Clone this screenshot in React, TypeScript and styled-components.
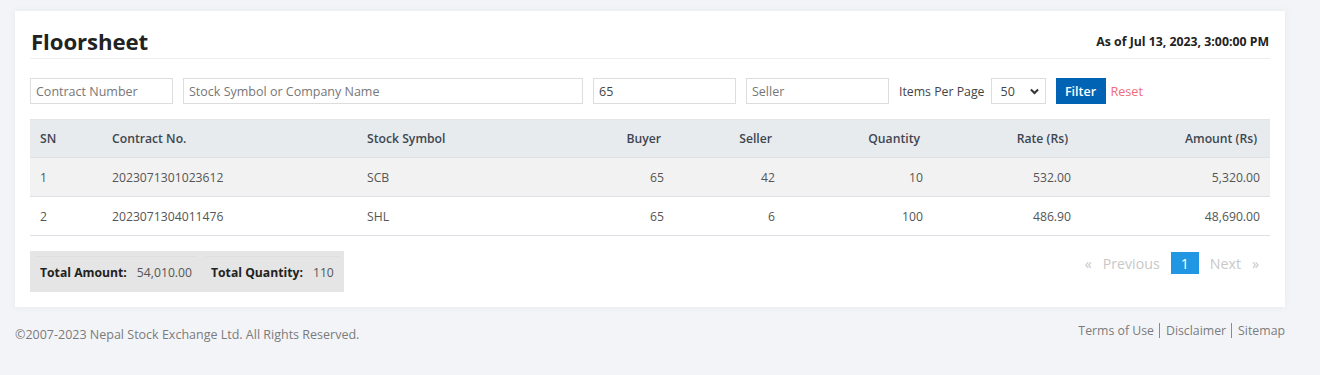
import React from "react";
import styled, { createGlobalStyle } from "styled-components";

const Global = createGlobalStyle`
  html, body { margin: 0; padding: 0; }
  body {
    background: #f3f4f8;
    font-family: "Open Sans", "Noto Sans", sans-serif;
    color: #555;
  }
  * { box-sizing: border-box; }
`;

const Page = styled.div`
  width: 1320px;
  height: 375px;
  padding: 11px 35px 0 15px;
`;

const Card = styled.section`
  background: #fff;
  box-shadow: 0 0 8px rgba(0, 0, 0, 0.05);
  padding: 13px 15px 15px 15px;
`;

const Header = styled.div`
  display: flex;
  align-items: center;
  justify-content: space-between;
  height: 35px;
  border-bottom: 1px solid #eceef1;
`;

const Title = styled.h1`
  margin: 0 0 0 1px;
  font-size: 22.2px;
  font-weight: 700;
  color: #222;
  letter-spacing: -0.1px;
`;

const AsOf = styled.div`
  font-size: 12.3px;
  font-weight: 700;
  color: #222;
  margin-right: 1px;
`;

const Filters = styled.form`
  display: flex;
  align-items: center;
  gap: 10px;
  margin-top: 19px;
  height: 26px;
`;

const Input = styled.input<{ $w: number }>`
  width: ${(p) => p.$w}px;
  height: 26px;
  border: 1px solid #ddd;
  padding: 0 5px;
  font-family: inherit;
  font-size: 12.5px;
  color: #444;
  outline: none;
  &::placeholder { color: #777; }
`;

const Label = styled.span`
  font-size: 12.3px;
  color: #444;
  margin-right: -4px;
`;

const Select = styled.div`
  position: relative;
  width: 55px;
  height: 26px;
  border: 1px solid #ddd;
  display: flex;
  align-items: center;
  padding: 0 0 0 9px;
  font-size: 12.5px;
  color: #444;
`;

const Chevron = styled.svg`
  position: absolute;
  right: 6px;
  top: 9px;
`;

const FilterButton = styled.button`
  height: 26px;
  width: 50px;
  border: none;
  background: #0063b3;
  color: #fff;
  font-family: inherit;
  font-size: 12.5px;
  font-weight: 600;
  padding: 0;
  margin-right: -5px;
`;

const ResetLink = styled.a`
  color: #f26b7a;
  font-size: 12.6px;
`;

const Table = styled.table`
  width: 100%;
  margin-top: 15px;
  border-collapse: collapse;
  table-layout: fixed;
  font-size: 12.2px;
`;

const Th = styled.th<{ $right?: boolean; $w: number }>`
  width: ${(p) => p.$w}px;
  height: 38px;
  background: #e8ebee;
  color: #3e4650;
  font-weight: 600;
  text-align: ${(p) => (p.$right ? "right" : "left")};
  padding: 0 ${(p) => (p.$right ? 13 : 10)}px 0 10px;
  border-top: 1px solid #e2e5e8;
`;

const Tr = styled.tr<{ $striped?: boolean }>`
  background: ${(p) => (p.$striped ? "#f2f2f2" : "#fff")};
`;

const Td = styled.td<{ $right?: boolean }>`
  height: 39px;
  padding: 0 10px;
  text-align: ${(p) => (p.$right ? "right" : "left")};
  color: #555;
  border-top: 1px solid #dee2e6;
  border-bottom: 1px solid #dee2e6;
`;

const Bottom = styled.div`
  display: flex;
  justify-content: space-between;
  align-items: flex-start;
  margin-top: 15px;
`;

const Totals = styled.div`
  display: flex;
  gap: 9px;
  background: #e5e5e5;
  padding: 5px;
`;

const TotalCell = styled.div`
  display: flex;
  align-items: center;
  gap: 10px;
  height: 31px;
  padding: 0 5px;
  border-top: 1px solid #dddfe2;
  font-size: 12.2px;
`;

const TotalLabel = styled.span`
  font-weight: 700;
  color: #222;
`;

const TotalValue = styled.span`
  color: #555;
`;

const Pager = styled.ul`
  display: flex;
  align-items: center;
  list-style: none;
  margin: 1px 11px 0 0;
  padding: 0;
  gap: 11px;
  font-size: 14.2px;
  color: #c8c8c8;
`;

const PageItem = styled.li<{ $active?: boolean }>`
  height: 22px;
  display: flex;
  align-items: center;
  padding: ${(p) => (p.$active ? "0 10px" : "0")};
  background: ${(p) => (p.$active ? "#2196e3" : "transparent")};
  color: ${(p) => (p.$active ? "#fff" : "#c8c8c8")};
`;

const Footer = styled.footer`
  display: flex;
  justify-content: space-between;
  align-items: flex-start;
  margin-top: 16px;
  font-size: 12.5px;
  color: #7b7b7b;
`;

const Copyright = styled.div`
  margin-top: 3px;
`;

const Links = styled.div`
  display: flex;
  margin-top: 0;
  font-size: 12.3px;
`;

const FooterLink = styled.a`
  color: #7b7b7b;
  padding: 0 5px 0 6px;
  border-left: 1px solid #8a8a8a;
  line-height: 15px;
  &:first-child { border-left: none; padding-left: 0; }
  &:last-child { padding-right: 0; }
`;

const columns: { label: string; w: number; right?: boolean }[] = [
  { label: "SN", w: 72 },
  { label: "Contract No.", w: 255 },
  { label: "Stock Symbol", w: 180 },
  { label: "Buyer", w: 137, right: true },
  { label: "Seller", w: 111, right: true },
  { label: "Quantity", w: 148, right: true },
  { label: "Rate (Rs)", w: 148, right: true },
  { label: "Amount (Rs)", w: 189, right: true },
];

const rows = [
  ["1", "2023071301023612", "SCB", "65", "42", "10", "532.00", "5,320.00"],
  ["2", "2023071304011476", "SHL", "65", "6", "100", "486.90", "48,690.00"],
];

export default function App() {
  return (
    <>
      <Global />
      <Page>
        <Card>
          <Header>
            <Title>Floorsheet</Title>
            <AsOf>As of Jul 13, 2023, 3:00:00 PM</AsOf>
          </Header>
          <Filters onSubmit={(e) => e.preventDefault()}>
            <Input $w={143} placeholder="Contract Number" />
            <Input $w={400} placeholder="Stock Symbol or Company Name" />
            <Input $w={143} defaultValue="65" />
            <Input $w={143} placeholder="Seller" />
            <Label>Items Per Page</Label>
            <Select>
              50
              <Chevron width="9" height="7" viewBox="0 0 10 7">
                <path d="M1 1.2 L5 5.2 L9 1.2" fill="none" stroke="#333" strokeWidth="2.2" />
              </Chevron>
            </Select>
            <FilterButton type="submit">Filter</FilterButton>
            <ResetLink>Reset</ResetLink>
          </Filters>
          <Table>
            <thead>
              <tr>
                {columns.map((c) => (
                  <Th key={c.label} $w={c.w} $right={c.right}>
                    {c.label}
                  </Th>
                ))}
              </tr>
            </thead>
            <tbody>
              {rows.map((r, i) => (
                <Tr key={i} $striped={i % 2 === 0}>
                  {r.map((v, j) => (
                    <Td key={j} $right={columns[j].right}>
                      {v}
                    </Td>
                  ))}
                </Tr>
              ))}
            </tbody>
          </Table>
          <Bottom>
            <Totals>
              <TotalCell>
                <TotalLabel>Total Amount:</TotalLabel>
                <TotalValue>54,010.00</TotalValue>
              </TotalCell>
              <TotalCell>
                <TotalLabel>Total Quantity:</TotalLabel>
                <TotalValue>110</TotalValue>
              </TotalCell>
            </Totals>
            <Pager>
              <PageItem>«</PageItem>
              <PageItem>Previous</PageItem>
              <PageItem $active>1</PageItem>
              <PageItem>Next</PageItem>
              <PageItem>»</PageItem>
            </Pager>
          </Bottom>
        </Card>
        <Footer>
          <Copyright>©2007-2023 Nepal Stock Exchange Ltd. All Rights Reserved.</Copyright>
          <Links>
            <FooterLink>Terms of Use</FooterLink>
            <FooterLink>Disclaimer</FooterLink>
            <FooterLink>Sitemap</FooterLink>
          </Links>
        </Footer>
      </Page>
    </>
  );
}
